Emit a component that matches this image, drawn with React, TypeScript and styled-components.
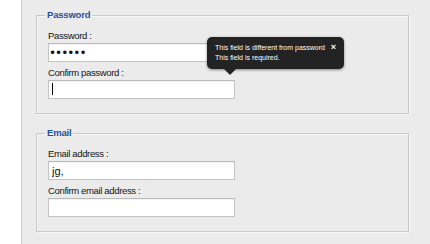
import React from "react";
import styled, { createGlobalStyle } from "styled-components";

const Global = createGlobalStyle`
  html, body { margin: 0; padding: 0; background: #ffffff; }
  body { font-family: "Liberation Sans", Arial, sans-serif; }
`;

const Page = styled.div`
  height: 244px;
  overflow: hidden;
  background: #ffffff;
`;

const Panel = styled.div`
  margin-left: 21px;
  width: 423px;
  height: 244px;
  box-sizing: border-box;
  background: #ebebeb;
  border-left: 1px solid #cfcfcf;
  border-right: 1px solid #c9c9c9;
  padding: 9px 13px 0 14px;
`;

const Fieldset = styled.fieldset`
  margin: 0 0 13px 0;
  padding: 8px 11px 14px 11px;
  width: 373px;
  box-sizing: border-box;
  border: 1px solid #c8c8c8;
  box-shadow: inset 1px 1px 0 #f7f7f7, 1px 1px 0 #f7f7f7;
  min-width: 0;
`;

const Legend = styled.legend`
  margin-left: -3px;
  padding: 0 2px;
  font-size: 9.5px;
  line-height: 12px;
  font-weight: bold;
  letter-spacing: -0.2px;
  color: #1f4f99;
`;

const Fields = styled.div`
  display: flex;
  flex-direction: column;
  gap: 4px;
`;

const Field = styled.div`
  display: flex;
  flex-direction: column;
`;

const Label = styled.label`
  display: block;
  font-size: 9.5px;
  line-height: 13px;
  letter-spacing: -0.35px;
  color: #141414;
  margin-bottom: 1px;
`;

const InputWrap = styled.div`
  position: relative;
  width: 187px;
  height: 19px;
`;

const Input = styled.input<{ $secret?: boolean }>`
  display: block;
  width: 187px;
  height: 19px;
  box-sizing: border-box;
  margin: 0;
  padding: 0 0 0 ${(p) => (p.$secret ? "0px" : "3px")};
  border: 1px solid #c4c4c4;
  border-top-color: #bababa;
  box-shadow: inset 0 1px 1px rgba(0, 0, 0, 0.06);
  background: #ffffff;
  color: #111111;
  font-family: ${(p) => (p.$secret ? `"DejaVu Sans", sans-serif` : `"Liberation Sans", Arial, sans-serif`)};
  font-size: ${(p) => (p.$secret ? "12px" : "11px")};
  letter-spacing: ${(p) => (p.$secret ? "-1px" : "0")};
  outline: none;
`;

const Caret = styled.span`
  position: absolute;
  left: 4px;
  top: 3px;
  width: 1px;
  height: 12px;
  background: #000000;
`;

const Tooltip = styled.div`
  position: absolute;
  left: 159px;
  bottom: calc(100% + 11px);
  width: 137px;
  height: 32px;
  box-sizing: border-box;
  padding: 6px 0 0 8px;
  background: #232323;
  border-radius: 5px;
  box-shadow: 0 1px 3px rgba(0, 0, 0, 0.45);
  color: #ffffff;
  font-family: "Liberation Sans", Arial, sans-serif;
  font-size: 7px;
  line-height: 10px;
  z-index: 2;

  &::after {
    content: "";
    position: absolute;
    left: 17px;
    top: 100%;
    border-left: 6px solid transparent;
    border-right: 6px solid transparent;
    border-top: 6px solid #232323;
  }
`;

const TipLine = styled.div`
  white-space: nowrap;
`;

const Close = styled.span`
  position: absolute;
  right: 8px;
  top: 5px;
  font-size: 9px;
  font-weight: bold;
  line-height: 10px;
  color: #ffffff;
`;

export default function App() {
  return (
    <Page>
      <Global />
      <Panel>
        <Fieldset>
          <Legend>Password</Legend>
          <Fields>
            <Field>
              <Label>Password :</Label>
              <InputWrap>
                <Input $secret type="password" value="secret" readOnly />
              </InputWrap>
            </Field>
            <Field>
              <Label>Confirm password :</Label>
              <InputWrap>
                <Input type="password" value="" readOnly />
                <Caret />
                <Tooltip>
                  <TipLine>This field is different from password</TipLine>
                  <TipLine>This field is required.</TipLine>
                  <Close>×</Close>
                </Tooltip>
              </InputWrap>
            </Field>
          </Fields>
        </Fieldset>
        <Fieldset>
          <Legend>Email</Legend>
          <Fields>
            <Field>
              <Label>Email address :</Label>
              <InputWrap>
                <Input type="text" value="jg," readOnly />
              </InputWrap>
            </Field>
            <Field>
              <Label>Confirm email address :</Label>
              <InputWrap>
                <Input type="text" value="" readOnly />
              </InputWrap>
            </Field>
          </Fields>
        </Fieldset>
      </Panel>
    </Page>
  );
}
